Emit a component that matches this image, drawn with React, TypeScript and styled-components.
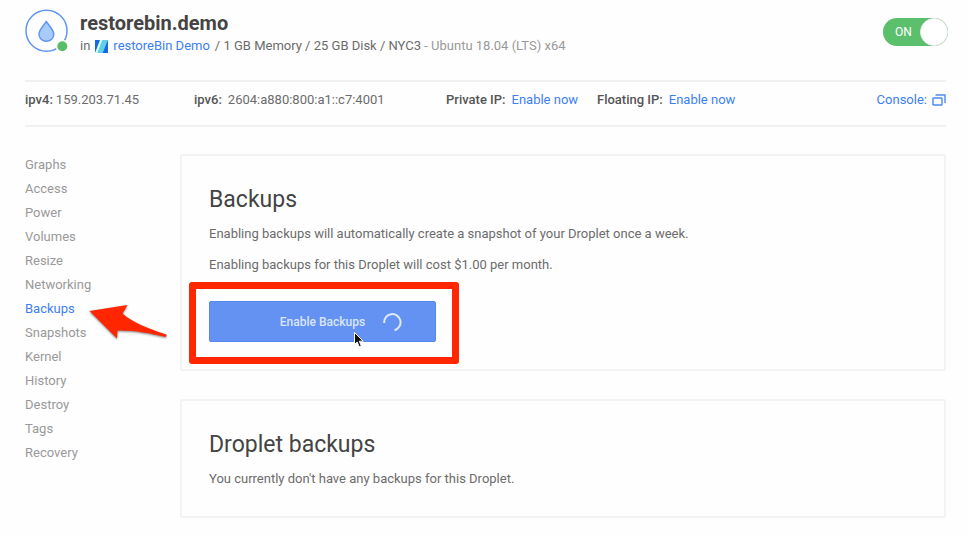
import React, { useState } from 'react';
import styled, { createGlobalStyle } from 'styled-components';

const GlobalStyle = createGlobalStyle`
  * { box-sizing: border-box; }
  body {
    margin: 0;
    background: #fefefe;
    color: #6c6c6c;
    font-family: Roboto, "Liberation Sans", sans-serif;
    font-size: 13px;
    line-height: 20px;
  }
  h1, h2, p, ul, dl, dd { margin: 0; padding: 0; }
`;

const Page = styled.div`
  padding: 8px 23px 19px 25px;
`;

const Header = styled.header`
  display: flex;
  align-items: flex-start;
  gap: 12px;
  padding-bottom: 24px;
`;

const DropletIcon = styled.svg`
  flex: none;
  width: 43px;
  height: 44px;
`;

const Identity = styled.div`
  flex: 1;
  padding-top: 2px;
`;

const Title = styled.h1`
  color: #444;
  font-size: 20px;
  font-weight: 700;
  line-height: 26px;
`;

const Summary = styled.p`
  display: flex;
  align-items: center;
  gap: 5px;
  white-space: pre;
`;

const ProjectIcon = styled.svg`
  width: 13px;
  height: 13px;
`;

const Muted = styled.span`
  color: #999;
`;

const Link = styled.a`
  color: #3d7ff5;
  text-decoration: none;
`;

const Power = styled.label`
  position: relative;
  display: flex;
  align-items: center;
  width: 65px;
  height: 28px;
  margin-top: 10px;
  margin-right: -2px;
  padding-left: 12px;
  border-radius: 14px;
  background: #5bbf6b;
  color: #fff;
  font-size: 12px;
  cursor: pointer;

  input {
    position: absolute;
    inset: 0;
    margin: 0;
    opacity: 0;
  }
`;

const Knob = styled.span`
  width: 28px;
  height: 28px;
  margin-left: auto;
  border: 1px solid #eee;
  border-radius: 50%;
  background: #fff;
`;

const AddressBar = styled.dl`
  display: grid;
  grid-template-columns: 169px 252px 151px 1fr auto;
  padding: 8px 0 15px;
  border: solid #f1f1f1;
  border-width: 2px 0;
`;

const Address = styled.div<{ $gap: number }>`
  display: flex;
  gap: ${({ $gap }) => $gap}px;

  dt { color: #555; font-weight: 500; }
`;

const ConsoleLink = styled(Link)`
  display: flex;
  align-items: center;
  gap: 5px;
`;

const Body = styled.div`
  display: grid;
  grid-template-columns: 128px 1fr;
  gap: 27px;
  align-items: start;
  padding-top: 27px;
`;

const Menu = styled.ul`
  position: relative;
  margin-top: -1px;
  list-style: none;
`;

const MenuLink = styled.a<{ $active: boolean }>`
  display: block;
  color: ${({ $active }) => ($active ? '#3d7ff5' : '#999')};
  line-height: 24px;
  text-decoration: none;
`;

const Arrow = styled.svg`
  position: absolute;
  top: 148px;
  left: 62px;
  width: 84px;
  height: 44px;
  overflow: visible;
  filter: drop-shadow(0 1px 1px rgba(0, 0, 0, 0.5));
`;

const Cards = styled.main`
  display: grid;
  gap: 28px;
`;

const Card = styled.section`
  padding: 28px 27px 27px;
  border: 2px solid #f3f3f3;
  border-radius: 2px;
`;

const Heading = styled.h2`
  margin-bottom: 8px;
  color: #444;
  font-size: 23px;
  font-weight: 400;
  line-height: 32px;
`;

const Text = styled.p`
  & + & { margin-top: 11px; }
`;

const Highlight = styled.div`
  position: relative;
  width: 227px;
  margin-top: 26px;

  &::after {
    content: '';
    position: absolute;
    inset: -19px -23px -22px -20px;
    border: 7px solid #ff2600;
    border-radius: 3px;
    pointer-events: none;
  }
`;

const EnableButton = styled.button`
  display: grid;
  grid-template-columns: 1fr auto 1fr;
  align-items: center;
  gap: 18px;
  width: 100%;
  height: 41px;
  padding: 0;
  border: 1px solid #5388ee;
  border-radius: 2px;
  background: #6492f2;
  color: #dae5fb;
  font: 500 12px/20px Roboto, sans-serif;

  span { grid-column: 2; }
`;

const Spinner = styled.svg`
  width: 19px;
  height: 20px;
`;

const Cursor = styled.svg`
  position: absolute;
  top: 30px;
  left: 144px;
  width: 12px;
  height: 18px;
`;

const menuItems = [
  'Graphs', 'Access', 'Power', 'Volumes', 'Resize', 'Networking', 'Backups',
  'Snapshots', 'Kernel', 'History', 'Destroy', 'Tags', 'Recovery',
];

export default function App() {
  const [on, setOn] = useState(true);
  return (
    <>
      <GlobalStyle />
      <Page>
        <Header>
          <DropletIcon viewBox="0 0 43 44" aria-hidden="true">
            <circle cx="21.5" cy="22.7" r="20.5" fill="none" stroke="#5f95f5" strokeWidth="1.5" />
            <path
              d="M21.3 13.5C19 17.3 14 21.6 14 26.3a7.4 6.9 0 0 0 14.8 0C28.8 21.6 23.6 17.3 21.3 13.5Z"
              fill="#a9cbfb" stroke="#5f95f5" strokeWidth="1.5" strokeLinejoin="round"
            />
            <circle cx="37.3" cy="38.2" r="6.5" fill="#fefefe" />
            <circle cx="37.3" cy="38.2" r="5" fill="#58bd69" />
          </DropletIcon>
          <Identity>
            <Title>restorebin.demo</Title>
            <Summary>
              in
              <ProjectIcon viewBox="0 0 13 13" aria-hidden="true">
                <path d="M0 0h13v13H0z" fill="#5edbe0" />
                <path d="M0 0h5.5L1.500 11 0 13z" fill="#1769e0" />
                <path d="M13 0v13H7.5L12 2z" fill="#1769e0" />
                <path d="M5 0h2.5L2.500 13H0z" fill="#d7fbf8" />
                <path d="M7.500 0H12.500L7.500 13H2.500z" fill="#62cfe6" />
              </ProjectIcon>
              <Link href="#project">restoreBin Demo</Link>
              <span>/ 1 GB Memory / 25 GB Disk / NYC3 <Muted>- Ubuntu 18.04 (LTS) x64</Muted></span>
            </Summary>
          </Identity>
          <Power>
            <input type="checkbox" aria-label="Droplet power" checked={on} onChange={() => setOn(!on)} />
            {on ? 'ON' : 'OFF'}
            <Knob />
          </Power>
        </Header>

        <AddressBar>
          <Address $gap={3}><dt>ipv4:</dt><dd>159.203.71.45</dd></Address>
          <Address $gap={6}><dt>ipv6:</dt><dd>2604:a880:800:a1::c7:4001</dd></Address>
          <Address $gap={6}><dt>Private IP:</dt><dd><Link href="#private-ip">Enable now</Link></dd></Address>
          <Address $gap={6}><dt>Floating IP:</dt><dd><Link href="#floating-ip">Enable now</Link></dd></Address>
          <ConsoleLink href="#console">
            Console:
            <svg width="14" height="12" viewBox="0 0 14 12" fill="none" stroke="#4d89f5" strokeWidth="1.4" aria-hidden="true">
              <rect x="1" y="4" width="9" height="7" rx="0.5" />
              <path d="M3.5 1H13v8" />
            </svg>
          </ConsoleLink>
        </AddressBar>

        <Body>
          <nav aria-label="Droplet">
            <Menu>
              {menuItems.map((item) => (
                <li key={item}>
                  <MenuLink href={`#${item.toLowerCase()}`} $active={item === 'Backups'}>{item}</MenuLink>
                </li>
              ))}
              <Arrow viewBox="0 0 84 44" aria-hidden="true">
                <path
                  d="M2.5 10 40.5 4 35.5 12.5C44 20.5 60 27.5 79.5 33.5L79 36C62 32 46 29 30.500 29.5L30 37.5Z"
                  fill="#ff2600"
                />
              </Arrow>
            </Menu>
          </nav>
          <Cards>
            <Card>
              <Heading>Backups</Heading>
              <Text>Enabling backups will automatically create a snapshot of your Droplet once a week.</Text>
              <Text>Enabling backups for this Droplet will cost $1.00 per month.</Text>
              <Highlight>
                <EnableButton type="button">
                  <span>Enable Backups</span>
                  <Spinner viewBox="0 0 19 20" aria-hidden="true">
                    <path d="M1.2 11A8.2 8.2 0 1 1 11.5 18.2" fill="none" stroke="#dfe8fc" strokeWidth="2" />
                  </Spinner>
                </EnableButton>
                <Cursor viewBox="0 0 12 18" aria-hidden="true">
                  <path
                    d="M1.5 1.5V13.5L4.2 11L6.2 15.8L8.3 14.9L6.3 10.2H10.2Z"
                    fill="#111" stroke="#fff" strokeWidth="1"
                  />
                </Cursor>
              </Highlight>
            </Card>
            <Card>
              <Heading>Droplet backups</Heading>
              <Text>You currently don't have any backups for this Droplet.</Text>
            </Card>
          </Cards>
        </Body>
      </Page>
    </>
  );
}
